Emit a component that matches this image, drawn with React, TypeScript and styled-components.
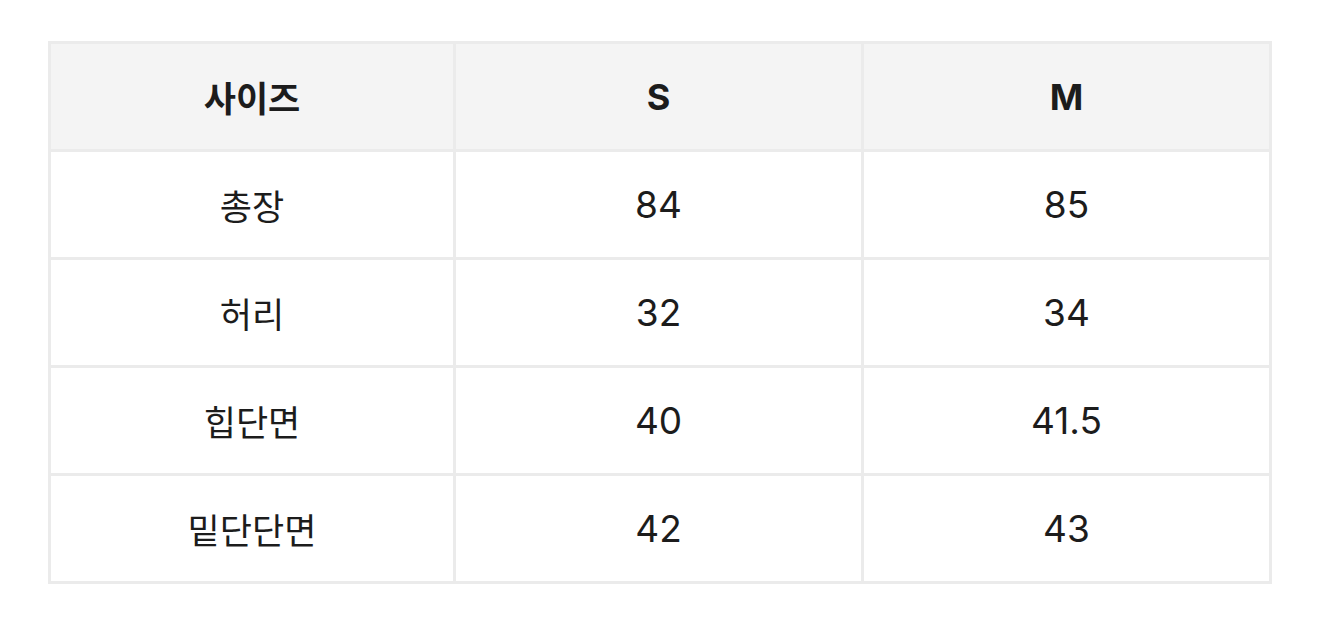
import React from "react";
import styled, { createGlobalStyle } from "styled-components";

const Global = createGlobalStyle`
  html, body { margin: 0; padding: 0; background: #ffffff; }
  body { font-family: "Inter", "Noto Sans CJK KR", sans-serif; color: #1c1c1c; }
`;

const Page = styled.div`
  padding: 41px 0 0 48px;
`;

const Table = styled.table`
  width: 1224px;
  border-collapse: collapse;
  table-layout: fixed;
  border: 3px solid #ebebeb;
`;

const Col = styled.col<{ $w: number }>`
  width: ${(p) => p.$w}px;
`;

const HeadCell = styled.th<{ $num?: boolean }>`
  height: 105px;
  padding: 0;
  border: 3px solid #ebebeb;
  background: #f4f4f4;
  font-size: ${(p) => (p.$num ? "36px" : "35px")};
  font-weight: 700;
  text-align: center;
  vertical-align: middle;
  color: #1c1c1c;
`;

const Cell = styled.td<{ $num?: boolean }>`
  height: 105px;
  padding: 0;
  border: 3px solid #ebebeb;
  font-size: ${(p) => (p.$num ? "37px" : "35px")};
  font-weight: 400;
  text-align: center;
  vertical-align: middle;
  color: #1c1c1c;
`;

const rows: [string, string, string][] = [
  ["총장", "84", "85"],
  ["허리", "32", "34"],
  ["힙단면", "40", "41.5"],
  ["밑단단면", "42", "43"],
];

export default function App() {
  return (
    <>
      <Global />
      <Page>
        <Table>
          <colgroup>
            <Col $w={405} />
            <Col $w={408} />
            <Col $w={408} />
          </colgroup>
          <thead>
            <tr>
              <HeadCell>사이즈</HeadCell>
              <HeadCell $num>S</HeadCell>
              <HeadCell $num>M</HeadCell>
            </tr>
          </thead>
          <tbody>
            {rows.map((r) => (
              <tr key={r[0]}>
                <Cell>{r[0]}</Cell>
                <Cell $num>{r[1]}</Cell>
                <Cell $num>{r[2]}</Cell>
              </tr>
            ))}
          </tbody>
        </Table>
      </Page>
    </>
  );
}
